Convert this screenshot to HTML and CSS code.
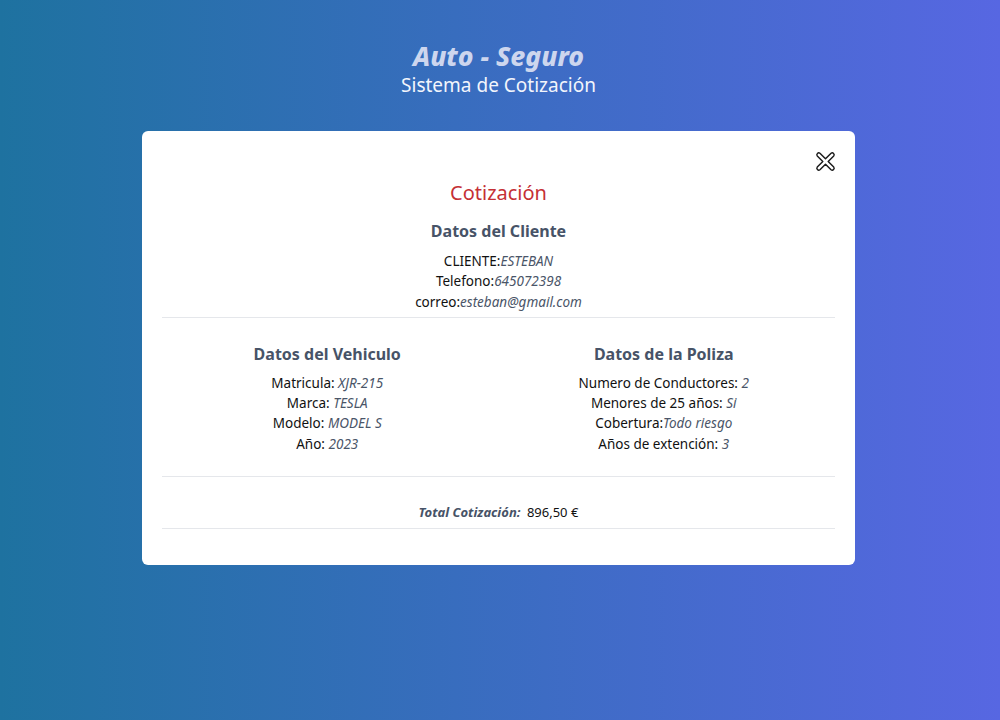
FILE: index.html
```html
<!DOCTYPE html>
<html lang="es">
<head>
<meta charset="utf-8">
<title>Auto - Seguro</title>
<link rel="stylesheet" href="styles.css">
</head>
<body>
<main class="page">
  <header class="header">
    <h1 class="brand">Auto - Seguro</h1>
    <p class="subtitle">Sistema de Cotización</p>
  </header>
  <section class="card">
    <button class="close" aria-label="Cerrar">
      <svg width="23" height="23" viewBox="0 0 24 24">
        <path d="M6.2 3.4 12 9.2l5.8-5.8a2 2 0 0 1 2.8 2.8L14.8 12l5.8 5.8a2 2 0 0 1-2.8 2.8L12 14.8l-5.8 5.8a2 2 0 0 1-2.8-2.8L9.2 12 3.4 6.2a2 2 0 0 1 2.8-2.8Z" fill="#fff" stroke="#1a1a1a" stroke-width="1.5" stroke-linejoin="round"/>
      </svg>
    </button>
    <h2 class="card-title">Cotización</h2>
    <div class="block">
      <h3 class="block-title">Datos del Cliente</h3>
      <p class="row">CLIENTE:<em>ESTEBAN</em></p>
      <p class="row">Telefono:<em>645072398</em></p>
      <p class="row">correo:<em>esteban@gmail.com</em></p>
    </div>
    <hr class="sep">
    <div class="columns">
      <div class="block">
        <h3 class="block-title">Datos del Vehiculo</h3>
        <p class="row">Matricula: <em>XJR-215</em></p>
        <p class="row">Marca: <em>TESLA</em></p>
        <p class="row">Modelo: <em>MODEL S</em></p>
        <p class="row">Año: <em>2023</em></p>
      </div>
      <div class="block">
        <h3 class="block-title">Datos de la Poliza</h3>
        <p class="row">Numero de Conductores: <em>2</em></p>
        <p class="row">Menores de 25 años: <em>Si</em></p>
        <p class="row">Cobertura:<em>Todo riesgo</em></p>
        <p class="row">Años de extención: <em>3</em></p>
      </div>
    </div>
    <hr class="sep">
    <p class="total"><strong>Total Cotización:</strong> 896,50 €</p>
    <hr class="sep sep-last">
  </section>
</main>
</body>
</html>
```
FILE: styles.css
```css
* { box-sizing: border-box; }
html, body { margin: 0; padding: 0; }
body {
  width: 1000px;
  height: 720px;
  overflow: hidden;
  background: linear-gradient(to right, #1e72a0, #5767e2);
  font-family: "Noto Sans", "Open Sans", sans-serif;
  color: #111;
}
.page {
  width: 997px;
  display: flex;
  flex-direction: column;
  align-items: center;
  padding-top: 40px;
}
.header { text-align: center; }
.brand {
  margin: 0;
  font-size: 26.5px;
  line-height: 32px;
  font-weight: 800;
  font-style: italic;
  color: #cdd6ee;
}
.subtitle {
  margin: 0;
  font-size: 19px;
  line-height: 26px;
  color: #f2f5fc;
}
.card {
  position: relative;
  margin-top: 33px;
  width: 713px;
  height: 434px;
  background: #fff;
  border-radius: 6px;
  padding: 49px 20px 0;
  text-align: center;
}
.close {
  position: absolute;
  top: 19px;
  right: 18px;
  width: 23px;
  height: 23px;
  padding: 0;
  border: 0;
  background: none;
}
.close svg { display: block; }
.card-title {
  margin: 0;
  font-size: 20px;
  line-height: 26px;
  font-weight: 400;
  color: #c53035;
}
.block-title {
  margin: 14px 0 9px;
  font-size: 16px;
  line-height: 22px;
  font-weight: 700;
  color: #475367;
}
.row {
  margin: 0;
  font-size: 13.5px;
  line-height: 20.3px;
  color: #111;
}
.row em {
  color: #4a5568;
  font-style: italic;
}
.sep {
  margin: 5px 0 0;
  border: 0;
  border-top: 1px solid #e5e7eb;
}
.columns {
  display: grid;
  grid-template-columns: 1fr 1fr;
  margin: 0 3px 0 -3px;
  padding: 11px 0 17px;
}
.columns .block-title { margin-bottom: 8px; }
.total {
  margin: 26px 0 7px;
  font-size: 13px;
  line-height: 18px;
  color: #111;
}
.total strong {
  font-style: italic;
  font-weight: 700;
  color: #475367;
  margin-right: 3px;
}
.sep-last { margin-top: 0; }
```
